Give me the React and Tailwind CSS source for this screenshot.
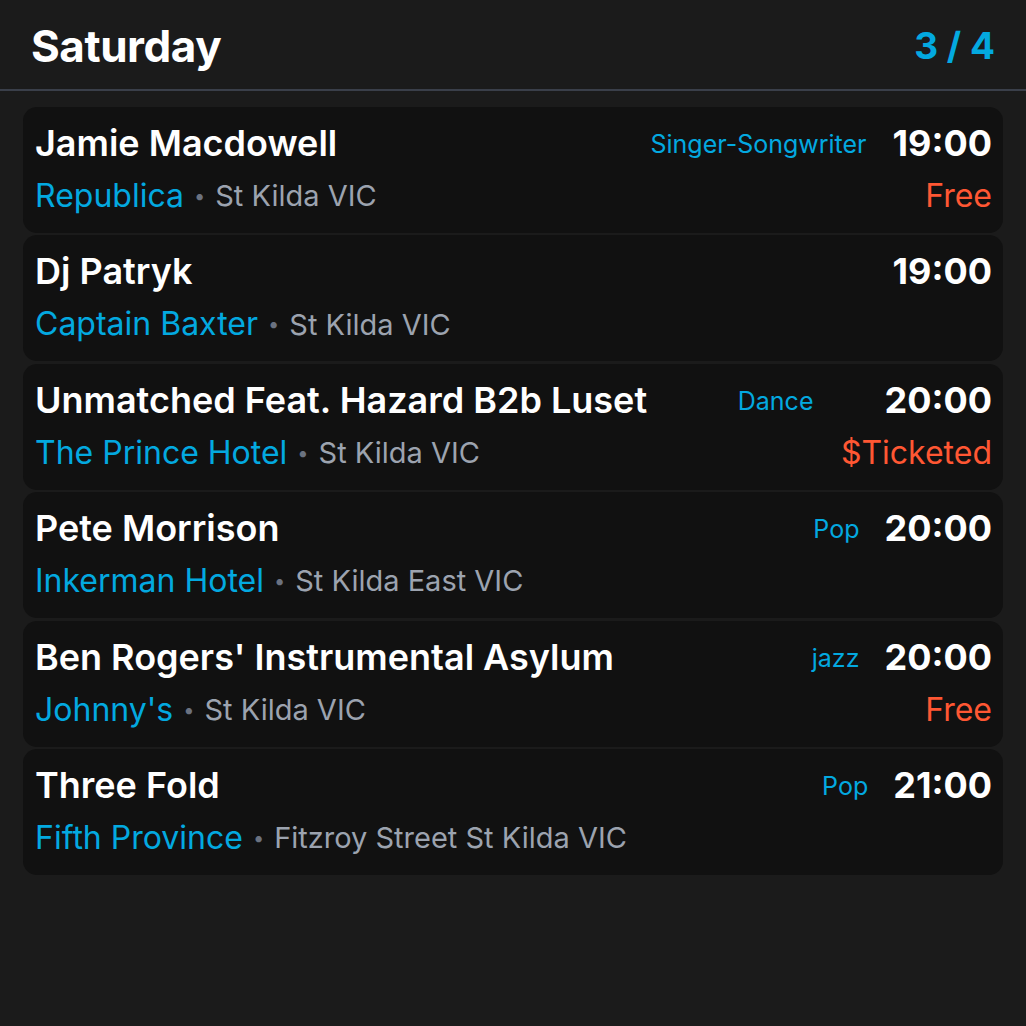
import React from "react";

const gigs = [
  { name: "Jamie Macdowell", venue: "Republica", place: "St Kilda VIC", genre: "Singer-Songwriter", gap: "mr-[26px]", time: "19:00", price: "Free" },
  { name: "Dj Patryk", venue: "Captain Baxter", place: "St Kilda VIC", genre: "", gap: "", time: "19:00", price: "" },
  { name: "Unmatched Feat. Hazard B2b Luset", venue: "The Prince Hotel", place: "St Kilda VIC", genre: "Dance", gap: "mr-[71px]", time: "20:00", price: "$Ticketed" },
  { name: "Pete Morrison", venue: "Inkerman Hotel", place: "St Kilda East VIC", genre: "Pop", gap: "mr-[25px]", time: "20:00", price: "" },
  { name: "Ben Rogers' Instrumental Asylum", venue: "Johnny's", place: "St Kilda VIC", genre: "jazz", gap: "mr-[25px]", time: "20:00", price: "Free" },
  { name: "Three Fold", venue: "Fifth Province", place: "Fitzroy Street St Kilda VIC", genre: "Pop", gap: "mr-[25px]", time: "21:00", price: "" },
];

const App = () => {
  return (
    <div className="w-[1026px] h-[1026px] bg-[#1b1b1b] font-['Inter',sans-serif] overflow-hidden">
      {/* header */}
      <div className="h-[91px] flex items-center justify-between pl-[31px] pr-[31px] border-b-2 border-[#3a3f4a]">
        <h1 className="text-[44px] font-bold text-white tracking-[-0.01em] mt-[2px]">Saturday</h1>
        <span className="text-[37px] font-bold text-[#03a9e0] mt-[2px]">3 / 4</span>
      </div>

      {/* list */}
      <div className="flex flex-col gap-[2.4px] px-[23px] pt-[16px]">
        {gigs.map((g) => (
          <div key={g.name} className="bg-[#111111] rounded-[14px] h-[126px] pl-[12px] pr-[11px] pt-[14px] flex flex-col">
            <div className="flex items-center h-[44px]">
              <span className="text-[36px] font-semibold text-white flex-1 truncate">{g.name}</span>
              {g.genre && <span className={"text-[25px] text-[#03a9e0] mt-[4px] " + g.gap}>{g.genre}</span>}
              <span className="text-[36px] font-bold text-white">{g.time}</span>
            </div>
            <div className="flex items-center h-[50px] mt-[6px]">
              <span className="text-[32px] text-[#03a9e0]">{g.venue}</span>
              <span className="text-[20px] text-[#6b7280] mx-[10px]">•</span>
              <span className="text-[29px] text-[#9ca3af] flex-1">{g.place}</span>
              {g.price && <span className="text-[32px] text-[#ff5733]">{g.price}</span>}
            </div>
          </div>
        ))}
      </div>
    </div>
  );
};

export default App;
